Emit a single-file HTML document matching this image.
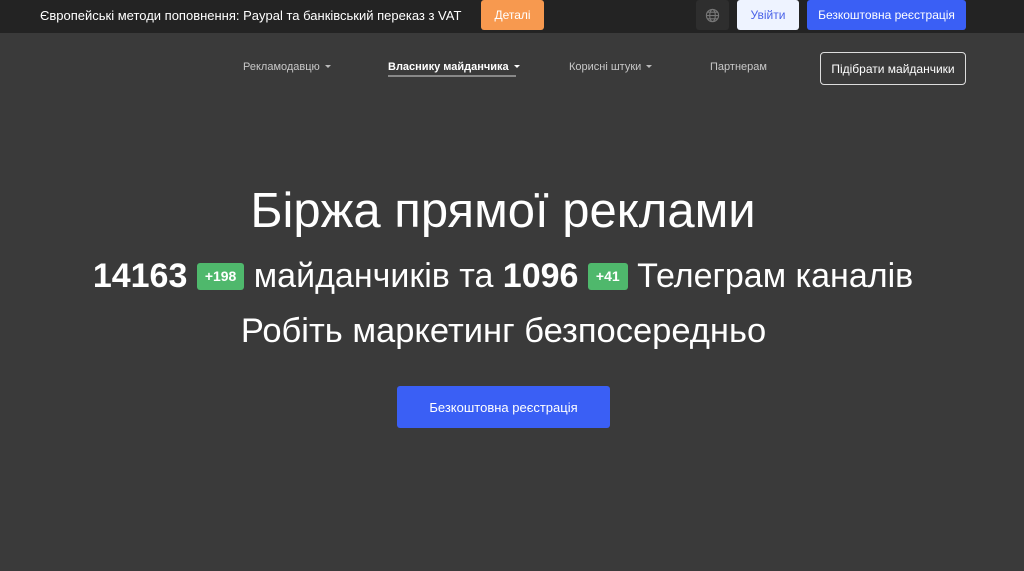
<!DOCTYPE html>
<html><head><meta charset="utf-8"><style>
*{margin:0;padding:0;box-sizing:border-box}
body{width:1024px;height:571px;background:#3a3a3a;font-family:"Liberation Sans",sans-serif;color:#fff;position:relative;overflow:hidden}
.top{position:absolute;left:0;top:0;width:1024px;height:33px;background:#232323}
.a{position:absolute}
.btn{position:absolute;display:flex;align-items:center;justify-content:center;border-radius:3px;font-size:12px}
.nav{position:absolute;top:61px;font-size:11px;color:#c8c8c8}
.car{display:inline-block;width:0;height:0;border-left:3px solid transparent;border-right:3px solid transparent;border-top:3px solid #bbb;margin-left:5px;vertical-align:2px}
.badge{display:inline-block;background:#4fb86c;color:#fff;font-size:14px;font-weight:bold;border-radius:3px;padding:0 8px;height:27px;line-height:27px;vertical-align:6px}
</style></head><body>
<div class="top"></div>
<div class="a" style="left:40px;top:8px;font-size:13px;color:#fff">Європейські методи поповнення: Paypal та банківський переказ з VAT</div>
<div class="btn" style="left:481px;top:0;width:63px;height:30px;background:#f7994f;color:#fff">Деталі</div>
<div class="btn" style="left:696px;top:0;width:33px;height:30px;background:#2e2e2e">
<svg width="15" height="15" viewBox="0 0 16 16" fill="none" stroke="#777" stroke-width="1.2"><circle cx="8" cy="8" r="6.5"/><ellipse cx="8" cy="8" rx="3" ry="6.5"/><path d="M1.5 8h13M2.5 4.5h11M2.5 11.5h11"/></svg></div>
<div class="btn" style="left:737px;top:0;width:62px;height:30px;background:#eef3ff;color:#4a62e8">Увійти</div>
<div class="btn" style="left:807px;top:0;width:159px;height:30px;background:#3a5ff5;color:#fff">Безкоштовна реєстрація</div>
<div class="nav" style="left:243px">Рекламодавцю<span class="car"></span></div>
<div class="nav" style="left:388px;color:#fff;font-weight:bold">Власнику майданчика<span class="car" style="border-top-color:#fff"></span></div>
<div class="a" style="left:388px;top:75px;width:128px;height:2px;background:#888"></div>
<div class="nav" style="left:569px">Корисні штуки<span class="car"></span></div>
<div class="nav" style="left:710px">Партнерам</div>
<div class="btn" style="left:820px;top:52px;width:146px;height:33px;border:1px solid #ddd;color:#fff;border-radius:4px">Підібрати майданчики</div>
<div class="a" style="left:0;width:1006px;top:183px;text-align:center;font-size:49px">Біржа прямої реклами</div>
<div class="a" style="left:0;width:1006px;top:257px;text-align:center;font-size:34px;white-space:nowrap"><b>14163</b> <span class="badge">+198</span> майданчиків та <b>1096</b> <span class="badge">+41</span> Телеграм каналів</div>
<div class="a" style="left:0;width:1007px;top:312px;text-align:center;font-size:34.5px">Робіть маркетинг безпосередньо</div>
<div class="btn" style="left:397px;top:386px;width:213px;height:42px;background:#3a5ff5;color:#fff;font-size:13px">Безкоштовна реєстрація</div>
</body></html>
